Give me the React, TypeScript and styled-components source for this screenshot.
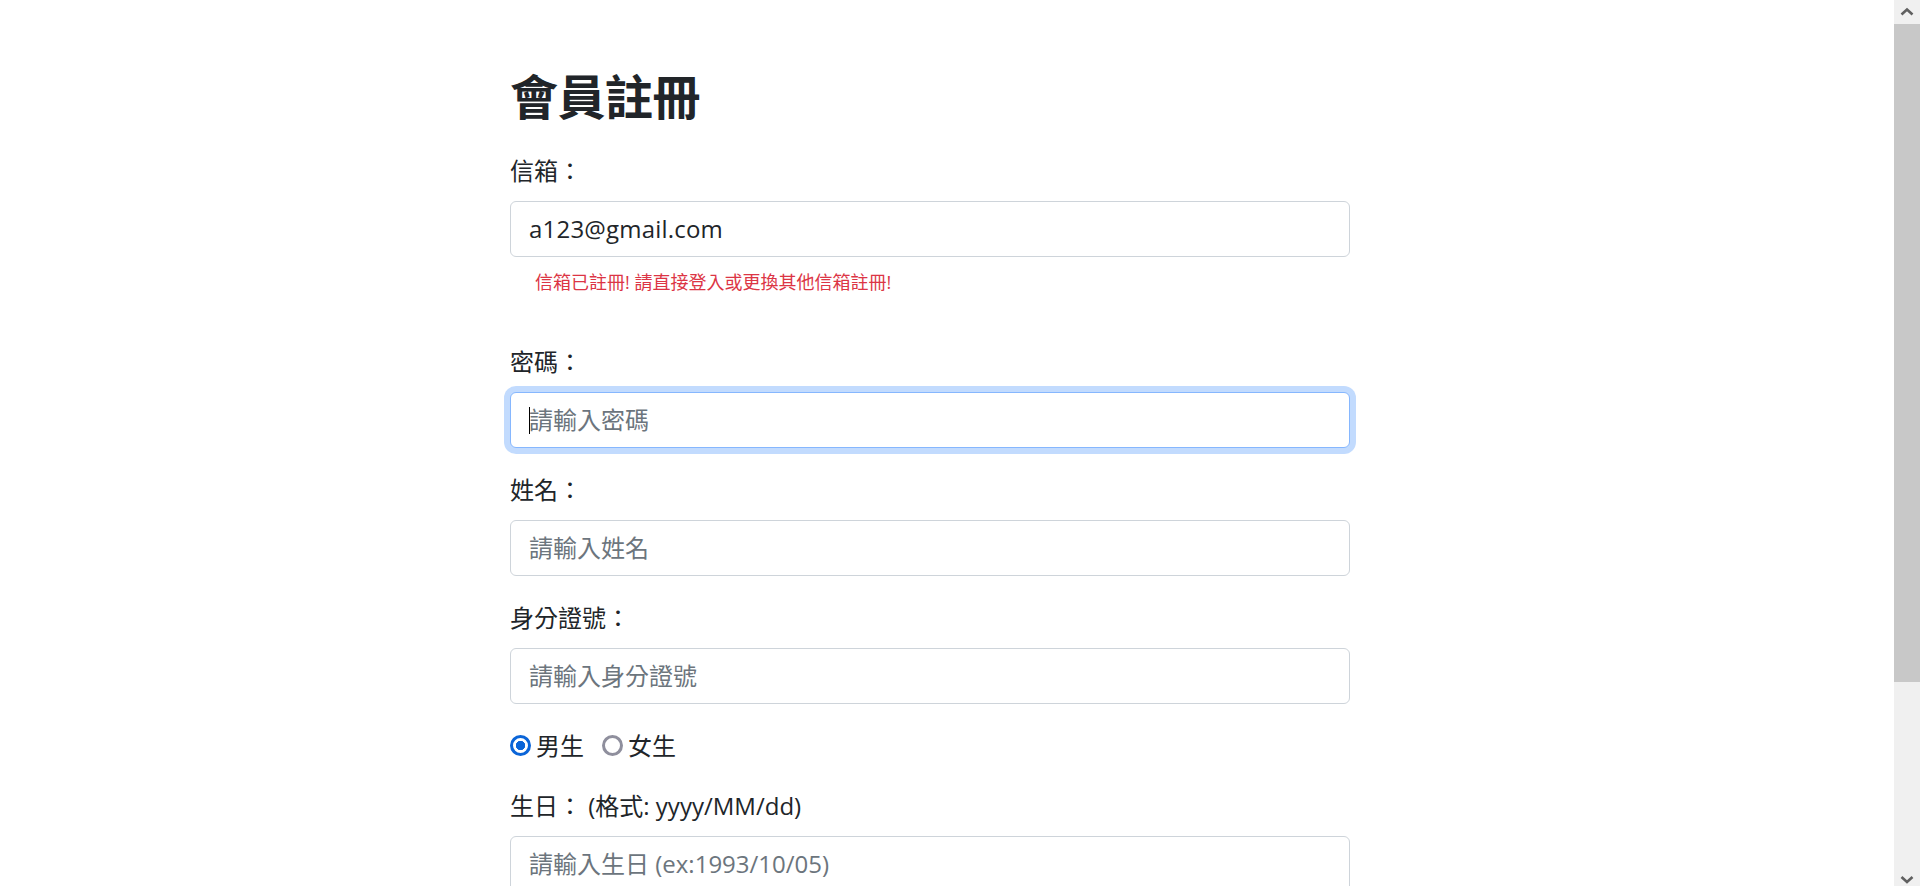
import React from "react";
import styled, { createGlobalStyle, css } from "styled-components";

const Global = createGlobalStyle`
  html, body { margin: 0; padding: 0; height: 100%; overflow: hidden; background: #fff; }
  body {
    font-family: "Open Sans", "Noto Sans CJK TC", sans-serif;
    color: #212529;
  }
  *, *::before, *::after { box-sizing: border-box; }
`;

const Shell = styled.div`
  display: flex;
  height: 100vh;
  overflow: hidden;
`;

const Main = styled.main`
  flex: 1;
  min-width: 0;
  overflow: hidden;
`;

const Form = styled.form`
  width: 840px;
  margin-left: 510px;
  padding-top: 68px;
`;

const Title = styled.h2`
  margin: 0 0 27px;
  font-size: 48px;
  line-height: 1.2;
  font-weight: 700;
  letter-spacing: -0.5px;
`;

const Group = styled.div<{ $gap?: number }>`
  margin-bottom: ${(p) => p.$gap ?? 24}px;
`;

const Label = styled.label`
  display: block;
  font-size: 24px;
  line-height: 36px;
  margin-bottom: 12px;
`;

const InputWrap = styled.div`
  position: relative;
`;

const Input = styled.input<{ $focused?: boolean }>`
  display: block;
  width: 100%;
  height: 56px;
  padding: 0 18px;
  font-family: inherit;
  font-size: 24px;
  letter-spacing: 0.2px;
  color: #212529;
  background: #fff;
  border: 1px solid #ced4da;
  border-radius: 6px;
  outline: none;
  &::placeholder {
    color: #6c757d;
    letter-spacing: 0;
  }
  ${(p) =>
    p.$focused &&
    css`
      border-color: #86b7fe;
      box-shadow: 0 0 0 6px rgba(13, 110, 253, 0.25);
    `}
`;

const Caret = styled.span`
  position: absolute;
  left: 19px;
  top: 15px;
  width: 1px;
  height: 27px;
  background: #000;
`;

const ErrorText = styled.div`
  margin: 12px 0 0 25px;
  font-size: 18px;
  line-height: 27px;
  color: #dc3545;
`;

const RadioRow = styled.div`
  display: flex;
  align-items: center;
  gap: 18px;
  height: 36px;
  margin-bottom: 24px;
`;

const RadioOption = styled.label`
  display: inline-flex;
  align-items: center;
  gap: 5px;
  font-size: 24px;
  line-height: 36px;
`;

const Radio = styled.input.attrs({ type: "radio" })`
  appearance: none;
  -webkit-appearance: none;
  flex: none;
  width: 21px;
  height: 21px;
  margin: 0;
  border-radius: 50%;
  border: 3px solid #8f8f9d;
  background: #fff;
  &:checked {
    border-color: #0b65d8;
    background: radial-gradient(circle, #0b65d8 0 4.4px, #fff 5px);
  }
`;

const Scrollbar = styled.div`
  width: 26px;
  flex: none;
  display: flex;
  flex-direction: column;
  background: #f0f0f0;
`;

const ScrollButton = styled.div`
  height: 24px;
  flex: none;
  display: flex;
`;

const Thumb = styled.div`
  height: 658px;
  flex: none;
  background: #c8c8c8;
`;

const Track = styled.div`
  flex: 1;
`;

const fields = [
  { label: "姓名：", placeholder: "請輸入姓名" },
  { label: "身分證號：", placeholder: "請輸入身分證號" },
];

export default function App() {
  return (
    <>
      <Global />
      <Shell>
        <Main>
          <Form onSubmit={(e) => e.preventDefault()}>
            <Title>會員註冊</Title>

            <Group $gap={48}>
              <Label>信箱：</Label>
              <Input type="email" defaultValue="a123@gmail.com" />
              <ErrorText>信箱已註冊! 請直接登入或更換其他信箱註冊!</ErrorText>
            </Group>

            <Group>
              <Label>密碼：</Label>
              <InputWrap>
                <Input type="password" placeholder="請輸入密碼" $focused />
                <Caret />
              </InputWrap>
            </Group>

            {fields.map((f) => (
              <Group key={f.label}>
                <Label>{f.label}</Label>
                <Input type="text" placeholder={f.placeholder} />
              </Group>
            ))}

            <RadioRow>
              <RadioOption>
                <Radio name="gender" defaultChecked />
                男生
              </RadioOption>
              <RadioOption>
                <Radio name="gender" />
                女生
              </RadioOption>
            </RadioRow>

            <Group>
              <Label>生日： (格式: yyyy/MM/dd)</Label>
              <Input type="text" placeholder="請輸入生日 (ex:1993/10/05)" />
            </Group>
          </Form>
        </Main>
        <Scrollbar>
          <ScrollButton>
            <svg width="26" height="24" viewBox="0 0 26 24">
              <polyline points="7.5,14.5 13,9.5 18.5,14.5" fill="none" stroke="#606060" strokeWidth="2.6" />
            </svg>
          </ScrollButton>
          <Thumb />
          <Track />
          <ScrollButton>
            <svg width="26" height="24" viewBox="0 0 26 24">
              <polyline points="7.5,15 13,20 18.5,15" fill="none" stroke="#606060" strokeWidth="2.6" />
            </svg>
          </ScrollButton>
        </Scrollbar>
      </Shell>
    </>
  );
}
